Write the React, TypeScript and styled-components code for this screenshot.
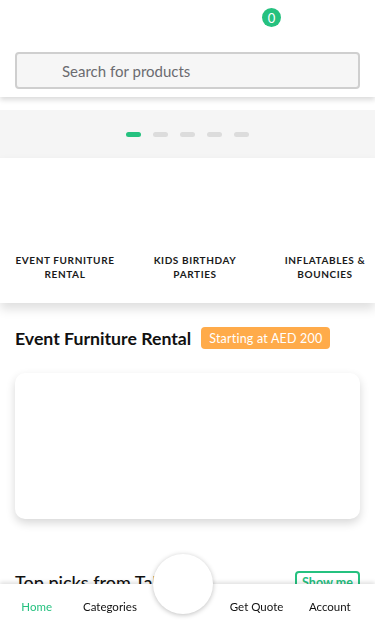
import styled, { createGlobalStyle } from 'styled-components';

const GREEN = '#25c17f';

const categories = [
  'Event Furniture Rental',
  'Kids Birthday Parties',
  'Inflatables & Bouncies',
];

const navItems = ['Home', 'Categories', '', 'Get Quote', 'Account'];

function App() {
  return (
    <>
      <GlobalStyle />
      <Header>
        <TopBar>
          <CartBadge>0</CartBadge>
        </TopBar>
        <SearchInput placeholder="Search for products" />
      </Header>

      <Carousel>
        <Dots>
          {[0, 1, 2, 3, 4].map((i) => (
            <Dot key={i} $active={i === 0} />
          ))}
        </Dots>
      </Carousel>

      <CategoryStrip>
        {categories.map((c) => (
          <CategoryItem key={c}>
            <CategoryLabel>{c}</CategoryLabel>
          </CategoryItem>
        ))}
      </CategoryStrip>

      <SectionHead>
        <SectionTitle>Event Furniture Rental</SectionTitle>
        <PriceTag>Starting at AED 200</PriceTag>
      </SectionHead>
      <FeatureCard />

      <PicksRow>
        <PicksTitle>Top picks from Tables</PicksTitle>
        <ShowMe>Show me</ShowMe>
      </PicksRow>

      <BottomNav>
        {navItems.map((item, i) =>
          item ? (
            <NavLink key={item} $active={i === 0}>
              {item}
            </NavLink>
          ) : (
            <NavCenter key="center">
              <Fab />
            </NavCenter>
          ),
        )}
      </BottomNav>
    </>
  );
}

export default App;

const GlobalStyle = createGlobalStyle`
  body {
    margin: 0;
    background: #fff;
    font-family: Lato, "Noto Sans", sans-serif;
    color: #111;
  }
`;

const Header = styled.header`
  position: relative;
  z-index: 2;
  height: 97px;
  background: #fff;
  box-shadow: 0 3px 5px rgba(0, 0, 0, 0.14);
`;

const TopBar = styled.div`
  display: flex;
  justify-content: flex-end;
  height: 40px;
  padding: 8px 94px 0 0;
  box-sizing: border-box;
`;

const CartBadge = styled.span`
  display: flex;
  align-items: center;
  justify-content: center;
  width: 19px;
  height: 19px;
  border-radius: 50%;
  background: ${GREEN};
  color: #fff;
  font-size: 13px;
`;

const SearchInput = styled.input`
  display: block;
  box-sizing: border-box;
  width: calc(100% - 30px);
  height: 37px;
  margin: 12px 15px 0;
  padding: 0 0 0 45px;
  border: 2px solid #cfcfcf;
  border-radius: 4px;
  background: #f6f6f6;
  font-family: Lato, sans-serif;
  font-size: 15px;
  outline: none;

  &::placeholder {
    color: #6b6b70;
  }
`;

const Carousel = styled.div`
  display: flex;
  align-items: center;
  justify-content: center;
  height: 48px;
  margin-top: 13px;
  background: #f5f5f5;
`;

const Dots = styled.div`
  display: flex;
  gap: 12px;
  padding-right: 1px;
`;

const Dot = styled.span<{ $active?: boolean }>`
  width: 15px;
  height: 5px;
  border-radius: 3px;
  background: ${(p) => (p.$active ? GREEN : '#dcdcdc')};
`;

const CategoryStrip = styled.div`
  position: relative;
  z-index: 1;
  display: flex;
  height: 145px;
  overflow: hidden;
  background: #fff;
  box-shadow: 0 6px 10px rgba(0, 0, 0, 0.13);
`;

const CategoryItem = styled.div`
  flex: 0 0 130px;
  display: flex;
  justify-content: center;
  padding-top: 95px;
`;

const CategoryLabel = styled.span`
  width: 110px;
  text-align: center;
  text-transform: uppercase;
  font-size: 10px;
  font-weight: 700;
  line-height: 14px;
  letter-spacing: 0.6px;
  color: #1a1a1a;
`;

const SectionHead = styled.div`
  display: flex;
  align-items: center;
  gap: 10px;
  margin: 24px 15px 0;
  height: 22px;
`;

const SectionTitle = styled.h2`
  margin: 0;
  font-size: 17.7px;
  font-weight: 700;
  color: #111;
`;

const PriceTag = styled.span`
  display: flex;
  align-items: center;
  height: 22px;
  padding: 0 8px;
  border-radius: 4px;
  background: #ffab4a;
  color: #fff;
  font-size: 12.5px;
  letter-spacing: 0.2px;
`;

const FeatureCard = styled.div`
  height: 146px;
  margin: 24px 15px 0;
  border-radius: 10px;
  background: #fff;
  box-shadow: 0 4px 10px rgba(0, 0, 0, 0.16);
`;

const PicksRow = styled.div`
  display: flex;
  align-items: flex-start;
  justify-content: space-between;
  margin: 52px 15px 40px;
`;

const PicksTitle = styled.h3`
  margin: 0;
  font-size: 18px;
  font-weight: 500;
  color: #111;
`;

const ShowMe = styled.button`
  box-sizing: border-box;
  width: 65px;
  height: 27px;
  padding: 0 0 4px;
  border: 2px solid ${GREEN};
  border-radius: 4px;
  background: #fff;
  color: ${GREEN};
  font-family: Lato, sans-serif;
  font-size: 12.5px;
  font-weight: 700;
`;

const BottomNav = styled.nav`
  position: fixed;
  left: 0;
  right: 0;
  bottom: 0;
  z-index: 5;
  display: grid;
  grid-template-columns: repeat(5, 73.3px);
  height: 43px;
  background: #fff;
  box-shadow: 0 -2px 4px rgba(0, 0, 0, 0.12);
`;

const NavLink = styled.a<{ $active?: boolean }>`
  display: flex;
  align-items: center;
  justify-content: center;
  padding-top: 2px;
  font-size: 11.5px;
  color: ${(p) => (p.$active ? GREEN : '#111')};
  white-space: nowrap;
`;

const NavCenter = styled.div`
  position: relative;
  display: flex;
  justify-content: center;
`;

const Fab = styled.div`
  position: absolute;
  top: -30px;
  width: 60px;
  height: 60px;
  border-radius: 50%;
  background: #fff;
  box-shadow: 0 1px 5px rgba(0, 0, 0, 0.25);
`;
